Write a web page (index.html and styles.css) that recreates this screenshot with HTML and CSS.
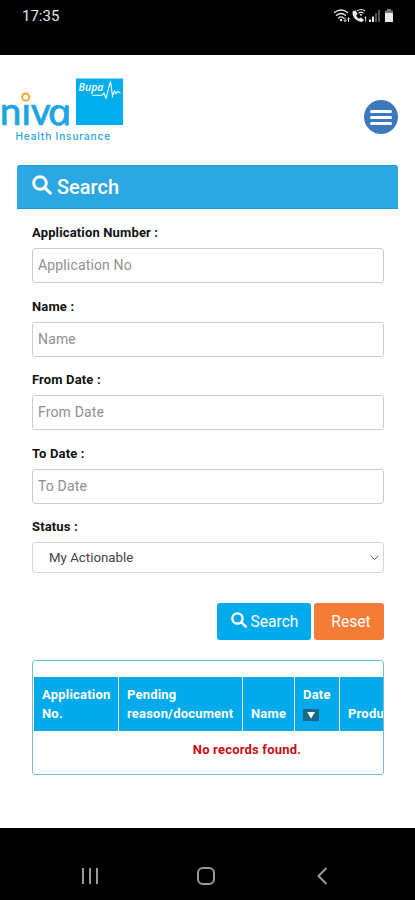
FILE: index.html
```html
<!DOCTYPE html>
<html lang="en">
<head>
<meta charset="utf-8">
<title>Niva Bupa Health Insurance</title>
<link rel="stylesheet" href="styles.css">
</head>
<body>
<div class="statusbar">
  <span>17:35</span>
  <svg width="62" height="16" viewBox="0 0 62 16" fill="none" stroke="#e8e8e8">
    <g stroke-width="1.3" stroke-linecap="round"><path d="M1.500 4.500q6.500-5 13 0M3.500 7.300q4.500-3.600 9 0M5.500 10q2.500-2.200 5 0"/><path d="M12 10v3.500m-1-1 1 1 1-1M15.500 13.500V10m-1 1 1-1 1 1" stroke-width="1"/></g>
    <circle cx="8" cy="12" r="1.2" fill="#e8e8e8" stroke="none"/>
    <path d="M20 3c-2 4 2 10 9 11l2-2-3-2.500-2 1c-1.500-.8-2.500-2-2.700-3.300L24.500 6l-1.700-3.500z" fill="#e8e8e8" stroke="none"/>
    <path d="M24 3q4-3 8 0M25.500 5.200q2.500-2 5 0M27 7.200q1-.9 2 0" stroke-width="1.2"/>
    <path d="M31.500 9.500l1.200-.7v4.700"/>
    <g fill="#e8e8e8" stroke="none"><path d="M36 11.500h2V14h-2zM39 8.500h2V14h-2z"/><path d="M42 5h2v9h-2zM45 2h2v12h-2z" fill="#555"/><path d="M52 5h8v9h-8z"/><path d="M54 1h4v1.500h2V5h-8V2.500h2z" fill="#777"/></g>
  </svg>
</div>
<header class="header">
  <svg class="logo" width="130" height="75" viewBox="0 70 130 75">
    <text x="-.2" y="125" class="word" textLength="51" lengthAdjust="spacingAndGlyphs">niv</text>
    <text class="word-a" transform="translate(50 125) scale(1.160 1) skewX(12)">a</text>
    <circle cx="25.700" cy="97" r="6" fill="#fff"/>
    <circle cx="25.700" cy="97" r="3.600" fill="#fff" stroke="#f5a72b" stroke-width="2"/>
    <path d="M76 78.500h47V125H76z" fill="#00aeef"/>
    <text x="78.500" y="90.500" class="bupa" textLength="25" lengthAdjust="spacingAndGlyphs">Bupa</text>
    <path d="M92 95.300h10l2-2 2 5 4.500-17L112.500 96l2-5 1.500 2.500 1.500-2 3 1.500" fill="none" stroke="#fff" stroke-width="1.100"/>
    <text x="15.500" y="139.800" class="tag" textLength="94.500">Health Insurance</text>
  </svg>
  <button class="menu" aria-label="Menu"><i></i><i></i><i></i></button>
</header>
<main>
  <h1><svg width="21" height="21" viewBox="0 0 21 21"><circle cx="8" cy="8" r="6.300"/><path d="m12.800 12.800 5.500 5.300"/></svg>Search</h1>
  <form>
    <label for="app">Application Number :</label><input id="app" placeholder="Application No">
    <label for="name">Name :</label><input id="name" placeholder="Name">
    <label for="from">From Date :</label><input id="from" placeholder="From Date">
    <label for="to">To Date :</label><input id="to" placeholder="To Date">
    <label for="status">Status :</label>
    <div class="select" id="status"><span>My Actionable</span><svg width="9" height="6" viewBox="0 0 9 6"><path d="m.7.8 3.800 3.800L8.300.8" fill="none" stroke="#555"/></svg></div>
    <div class="actions">
      <button type="button" class="search"><svg width="17" height="17" viewBox="0 0 21 21"><circle cx="8" cy="8" r="6.300"/><path d="m12.800 12.800 5.500 5.300"/></svg>Search</button>
      <button type="button" class="reset">Reset</button>
    </div>
  </form>
  <section class="results">
    <div class="heads">
      <div><span>Application</span><span>No.</span></div>
      <div><span>Pending</span><span>reason/document</span></div>
      <div><span>Name</span></div>
      <div><span>Date</span><span class="sort"><svg width="16" height="12" viewBox="0 0 16 12"><path d="M0 0h16v12H0z" fill="#176a8c"/><path d="M4 3h8l-4 6.500z" fill="#fff"/></svg></span></div>
      <div><span>Produ</span></div>
    </div>
    <p>No records found.</p>
  </section>
</main>
<nav class="navbar">
  <svg width="18" height="18" viewBox="0 0 18 18"><path d="M2 1v16M9 1v16M16 1v16"/></svg>
  <svg width="20" height="20" viewBox="0 0 20 20"><rect x="2" y="2" width="16" height="16" rx="5"/></svg>
  <svg width="12" height="18" viewBox="0 0 12 18"><path d="M10.500 1 2.500 9l8 8"/></svg>
</nav>
</body>
</html>
```
FILE: styles.css
```css
* { box-sizing: border-box; }
body { margin: 0; width: 415px; height: 900px; overflow: hidden; display: flex; flex-direction: column; background: #fff; font-family: Roboto, sans-serif; color: #111; }
.statusbar { height: 55px; flex: none; background: #000; color: #e8e8e8; display: flex; justify-content: space-between; align-items: flex-start; padding: 8px 20px 0 22px; font-size: 15px; line-height: 17px; }
.header { height: 110px; flex: none; display: flex; justify-content: space-between; padding: 15px 17px 0 0; }
.word { font: 500 39px Lato, sans-serif; fill: #1fa5df; stroke: #1fa5df; stroke-width: .6px; }
.word-a { font: italic 400 36px "Open Sans", sans-serif; fill: #1fa5df; stroke: #1fa5df; stroke-width: .9px; }
.bupa { font: italic 600 10.5px "Open Sans", sans-serif; fill: #fff; }
.tag { font: 500 10px Inter, sans-serif; fill: #25a5df; }
.menu { width: 34px; height: 34px; margin-top: 30px; padding: 0; border: 0; border-radius: 50%; background: #3c78bd; display: flex; flex-direction: column; align-items: center; justify-content: center; gap: 3px; }
.menu i { width: 22px; height: 3px; border-radius: 2px; background: #fff; }
main { flex: 1; padding: 0 17px; }
h1 { margin: 0; height: 44px; background: #2ba8e1; border: 1px solid #1b9bd0; border-width: 1px 0; border-radius: 3px 3px 0 0; color: #fff; font-size: 20px; font-weight: 500; line-height: 42px; display: flex; padding-left: 15px; gap: 4px; }
h1 svg { margin-top: 9px; }
h1 svg, .search svg { fill: none; stroke: #fff; stroke-width: 3; stroke-linecap: round; }
form { padding: 0 14px 0 15px; }
label { display: block; font-size: 13px; font-weight: 700; line-height: 18px; margin-top: 15px; letter-spacing: .15px; }
input { display: block; width: 100%; height: 35px; margin-top: 6px; margin-bottom: 14.600px; border: 1px solid #ccc; border-radius: 3px; padding: 0 5px 1px; font: 14px Roboto, sans-serif; letter-spacing: .15px; }
input::placeholder { color: #909090; opacity: 1; }
input + label { margin-top: 0; }
.select { margin-top: 6px; height: 31px; border: 1px solid #d5d5d5; border-radius: 3px; display: flex; justify-content: space-between; align-items: center; padding: 0 4px 0 16px; font-size: 13.3px; color: #444; }
.actions { margin-top: 30px; display: flex; justify-content: flex-end; gap: 3px; }
.actions button { height: 37px; border: 0; border-radius: 3px; color: #fff; font: 15.600px Roboto, sans-serif; padding: 0; }
.actions .search { width: 94px; background: #00aaeb; display: flex; justify-content: center; align-items: center; gap: 3px; padding-left: 1px; }
.search svg { margin-top: -2px; }
.actions .reset { width: 70px; background: #f47c36; padding-left: 4px; }
.results { margin: 20px 14px 0 15px; height: 115px; border: 1px solid #72bfce; border-radius: 3px; overflow: hidden; padding: 16px 0 0 1px; }
.heads { display: grid; grid-template-columns: 84px 123px 51px 44px 43px; gap: 1px; height: 54px; color: #fff; font-size: 13px; font-weight: 700; line-height: 19px; letter-spacing: .2px; }
.heads div { background: #00aaeb; padding: 0 0 8px 8px; display: flex; flex-direction: column; justify-content: flex-end; }
.sort { height: 19px; display: flex; align-items: center; padding-top: 2px; }
.results p { margin: 10px 0 0; padding-left: 76px; width: 350px; text-align: center; color: #c80d12; font-size: 13px; font-weight: 700; line-height: 18px; letter-spacing: .2px; }
.navbar { height: 72px; flex: none; background: #000; display: flex; justify-content: space-between; align-items: center; padding: 24px 87px 0 81px; }
.navbar svg { fill: none; stroke: #999; stroke-width: 2; }
.navbar svg:nth-child(2) { margin-right: 4px; }
```
